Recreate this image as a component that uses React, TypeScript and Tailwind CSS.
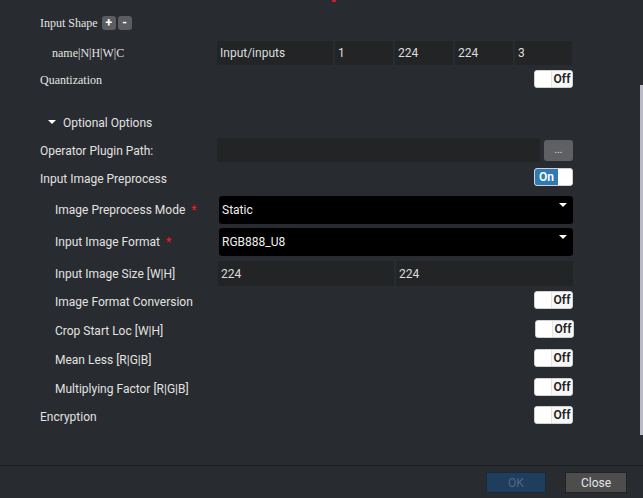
import React from "react";

const sans = { fontFamily: "Roboto, 'Liberation Sans', sans-serif" };
const serif = { fontFamily: "'Liberation Serif', 'DejaVu Serif', serif" };

function Toggle({ on = false }: { on?: boolean }) {
  if (on) {
    return (
      <div className="flex h-[18px] w-[39px] overflow-hidden rounded-[3px] border border-[#d0d0d0] bg-white">
        <div className="flex w-[23px] items-center justify-center bg-[#2f79b5] text-[12px] font-semibold text-white" style={sans}>
          On
        </div>
        <div className="flex-1 bg-white" />
      </div>
    );
  }
  return (
    <div className="flex h-[18px] w-[39px] overflow-hidden rounded-[3px] border border-[#d0d0d0] bg-white">
      <div className="w-[17px] border-r border-[#e4e4e4] bg-white" />
      <div className="flex flex-1 items-center justify-center bg-[#f7f7f7] text-[12px] font-semibold text-[#222]" style={sans}>
        Off
      </div>
    </div>
  );
}

function Label({ children, indent = false, star = false, shift = false }: { children: React.ReactNode; indent?: boolean; star?: boolean; shift?: boolean }) {
  return (
    <div className={`flex w-[177px] shrink-0 items-center text-[12px] text-[#e2e2e2] ${indent ? "pl-[15px]" : ""} ${shift ? "translate-y-[2px]" : ""}`} style={sans}>
      {children}
      {star && <span className="ml-[6px] text-[#ff1a1a]">*</span>}
    </div>
  );
}

function TextBox({ value, w, h = 25 }: { value: string; w: string; h?: number }) {
  return (
    <div
      className={`flex items-center rounded-[2px] bg-[#222426] px-[3px] text-[12px] text-[#dcdcdc] ${w}`}
      style={{ ...sans, height: h }}
    >
      {value}
    </div>
  );
}

function Select({ value }: { value: string }) {
  return (
    <div className="relative flex h-[28px] w-[354px] items-center rounded-[3px] bg-black pl-[3px] text-[12px] text-[#f0f0f0]" style={sans}>
      {value}
      <span className="absolute right-[6px] top-[7px] h-0 w-0 border-x-[4px] border-t-[4px] border-x-transparent border-t-white" />
    </div>
  );
}

export default function App() {
  return (
    <div className="relative flex h-[498px] w-[643px] flex-col overflow-hidden bg-[#282b2f]">
      <div className="absolute left-[332px] top-0 h-[2px] w-[4px] bg-[#c8202a]" />
      <div className="absolute right-0 top-[85px] h-[350px] w-[3px] bg-[#b9bac6]" />

      <div className="flex flex-1 flex-col pl-[40px] pt-[13px]">
        {/* Input Shape */}
        <div className="flex h-[20px] items-center">
          <span className="text-[12px] text-[#e4e4e4]" style={serif}>Input Shape</span>
          <span className="ml-[4px] flex h-[14px] w-[14px] items-center justify-center rounded-[3px] bg-[#5b5d60] text-[12px] font-bold text-white" style={sans}>+</span>
          <span className="ml-[2px] flex h-[14px] w-[14px] items-center justify-center rounded-[3px] bg-[#5b5d60] text-[12px] font-bold text-white" style={sans}>-</span>
        </div>

        {/* name row */}
        <div className="mt-[7px] flex h-[25px] items-center">
          <div className="w-[177px] shrink-0 pl-[12px] text-[12px] text-[#e4e4e4]" style={serif}>name|N|H|W|C</div>
          <div className="flex gap-[2px]">
            <TextBox value="Input/inputs" w="w-[116px]" h={24} />
            <TextBox value="1" w="w-[58px]" h={24} />
            <TextBox value="224" w="w-[58px]" h={24} />
            <TextBox value="224" w="w-[58px]" h={24} />
            <TextBox value="3" w="w-[57px]" h={24} />
          </div>
        </div>

        {/* Quantization */}
        <div className="mt-[5px] flex h-[18px] w-[533px] items-center justify-between">
          <span className="translate-y-[1px] text-[12px] text-[#e4e4e4]" style={serif}>Quantization</span>
          <Toggle />
        </div>

        {/* Optional Options */}
        <div className="mt-[24px] flex h-[20px] items-center pl-[8px] text-[12px] text-[#e2e2e2]" style={sans}>
          <span className="mr-[7px] h-0 w-0 border-x-[4px] border-t-[4px] border-x-transparent border-t-white" />
          <span className="translate-y-[1px]">Optional Options</span>
        </div>

        {/* Operator Plugin Path */}
        <div className="mt-[6px] flex h-[24px] items-center">
          <Label>
            <span className="translate-y-[1px]">Operator Plugin Path:</span>
          </Label>
          <div className="h-[24px] w-[323px] rounded-[2px] bg-[#222426]" />
          <div className="ml-[4px] flex h-[21px] w-[29px] items-center justify-center rounded-[3px] bg-[#5e6063] text-[10px] leading-none text-[#e0e0e0]" style={sans}>
            ...
          </div>
        </div>

        {/* Input Image Preprocess */}
        <div className="mt-[6px] flex h-[18px] w-[533px] items-center justify-between">
          <Label shift>Input Image Preprocess</Label>
          <Toggle on />
        </div>

        <div className="mt-[10px] flex h-[28px] items-center">
          <Label indent star>Image Preprocess Mode</Label>
          <div className="ml-[2px]"><Select value="Static" /></div>
        </div>

        <div className="mt-[4px] flex h-[28px] items-center">
          <Label indent star>Input Image Format</Label>
          <div className="ml-[2px]"><Select value="RGB888_U8" /></div>
        </div>

        <div className="mt-[5px] flex h-[25px] items-center">
          <Label indent>Input Image Size [W|H]</Label>
          <div className="ml-[1px] flex gap-[2px]">
            <TextBox value="224" w="w-[176px]" />
            <TextBox value="224" w="w-[177px]" />
          </div>
        </div>

        <div className="mt-[5px] flex h-[18px] w-[533px] items-center justify-between">
          <Label indent shift>Image Format Conversion</Label>
          <Toggle />
        </div>
        <div className="mt-[11px] flex h-[18px] w-[534px] items-center justify-between">
          <Label indent shift>Crop Start Loc [W|H]</Label>
          <Toggle />
        </div>
        <div className="mt-[11px] flex h-[18px] w-[533px] items-center justify-between">
          <Label indent shift>Mean Less [R|G|B]</Label>
          <Toggle />
        </div>
        <div className="mt-[11px] flex h-[18px] w-[533px] items-center justify-between">
          <Label indent shift>Multiplying Factor [R|G|B]</Label>
          <Toggle />
        </div>
        <div className="mt-[10px] flex h-[18px] w-[533px] items-center justify-between">
          <Label shift>Encryption</Label>
          <Toggle />
        </div>
      </div>

      {/* Footer */}
      <div className="flex h-[33px] items-start justify-end gap-[19px] border-t border-[#1c1f22] bg-[#282b2f] pr-[16px] pt-[6px]">
        <div className="flex h-[21px] w-[60px] items-center justify-center border border-[#1a2a3a] bg-[#1f3d5c] text-[12px] text-[#4f6780]" style={sans}>
          OK
        </div>
        <div className="flex h-[21px] w-[62px] items-center justify-center border border-[#222] bg-[#4d4d4d] text-[12px] text-[#e6e6e6]" style={sans}>
          Close
        </div>
      </div>
    </div>
  );
}
